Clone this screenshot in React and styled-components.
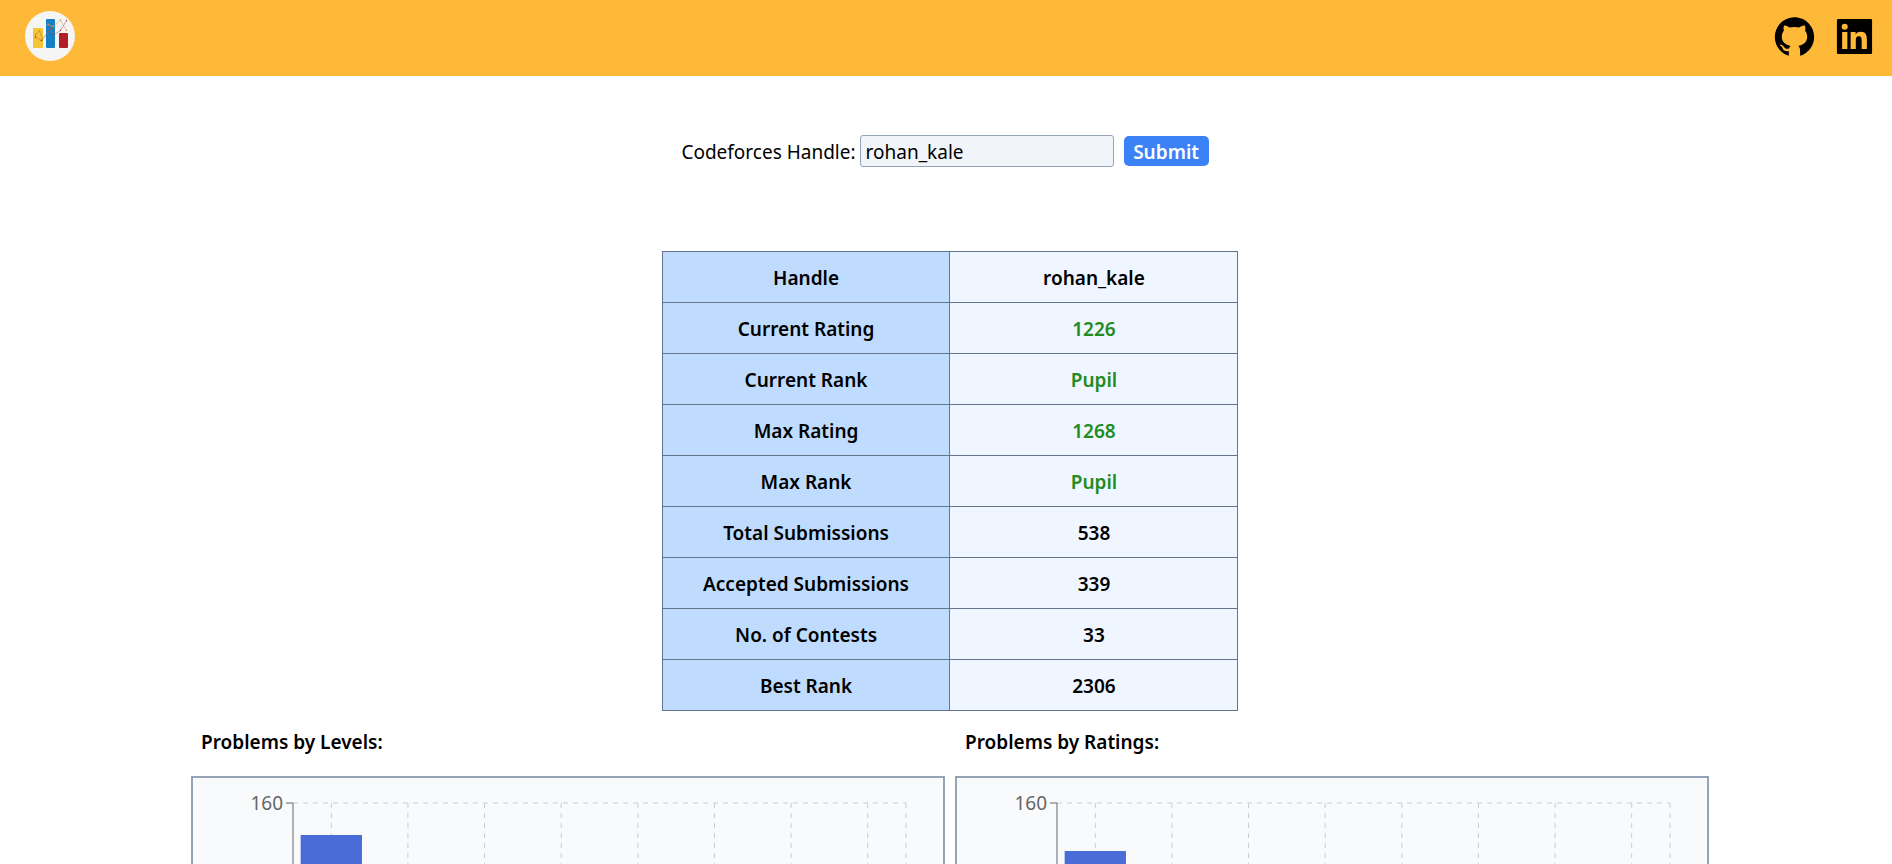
import React from "react";
import styled, { createGlobalStyle } from "styled-components";
import { AiFillGithub, AiFillLinkedin } from "react-icons/ai";

const GlobalStyle = createGlobalStyle`
  *, *::before, *::after { box-sizing: border-box; }
  body {
    margin: 0;
    background: #fff;
    color: #000;
    font-family: "Segoe UI", "Noto Sans", "Open Sans", sans-serif;
    font-size: 19px;
    line-height: 30px;
  }
`;

const Header = styled.header`
  display: flex;
  align-items: flex-start;
  justify-content: space-between;
  height: 76px;
  padding: 11px 15px 0 25px;
  background: #ffb938;
`;

const HomeLink = styled.a`
  display: flex;
`;

const SocialLinks = styled.nav`
  display: flex;
  gap: 15px;
  padding-top: 3px;
`;

const SocialLink = styled.a`
  display: flex;
  color: #000;
  font-size: 45px;
`;

const Main = styled.main`
  display: flex;
  flex-direction: column;
  align-items: center;
  padding: 59px 183px 40px 191px;
`;

const HandleForm = styled.form`
  display: flex;
  align-items: center;
  margin: 0 10px 84px 0;
`;

const HandleLabel = styled.label`
  padding-top: 1px;
`;

const HandleInput = styled.input`
  width: 254px;
  height: 32px;
  margin: 0 10px 0 4px;
  padding: 1px 5px 0;
  border: 1px solid #94a3b8;
  border-radius: 3px;
  background: #f1f5f9;
  color: #000;
  font: inherit;
`;

const SubmitButton = styled.button`
  width: 85px;
  height: 30px;
  padding: 1px 0 0;
  border: 0;
  border-radius: 5px;
  background: #3b82f6;
  color: #fff;
  font: inherit;
  font-weight: 600;
  cursor: pointer;
`;

const StatsTable = styled.table`
  width: 38%;
  table-layout: fixed;
  border-collapse: collapse;
  text-align: center;
  font-weight: 600;
`;

const StatName = styled.th`
  padding: 11px 0 9px;
  border: 1px solid #64748b;
  background: #bfdbfe;
  font-weight: 600;
`;

const StatValue = styled.td`
  padding: 11px 0 9px;
  border: 1px solid #64748b;
  background: #eff6ff;
  color: ${(p) => (p.$ranked ? "#228b22" : "#000")};
`;

const Charts = styled.div`
  display: grid;
  grid-template-columns: 1fr 1fr;
  gap: 10px;
  width: 100%;
`;

const ChartTitle = styled.h2`
  margin: 0;
  padding: 16px 10px 19px;
  font-size: 19px;
  font-weight: 600;
`;

const ChartPanel = styled.div`
  padding: 25px 37px 40px 100px;
  border: 2px solid #94a3b8;
  background: #f8fafc;
`;

const Plot = styled.svg`
  display: block;
  width: 100%;
  height: 320px;
  overflow: visible;
`;

const AxisLabel = styled.text`
  fill: #666;
  font-size: 19px;
  text-anchor: end;
`;

const stats = [
  ["Handle", "rohan_kale"],
  ["Current Rating", "1226", true],
  ["Current Rank", "Pupil", true],
  ["Max Rating", "1268", true],
  ["Max Rank", "Pupil", true],
  ["Total Submissions", "538"],
  ["Accepted Submissions", "339"],
  ["No. of Contests", "33"],
  ["Best Rank", "2306"],
];

const AXIS_MAX = 160;
const PLOT_HEIGHT = 320;
const CATEGORIES = 8;

function Logo() {
  return (
    <svg width="50" height="50" viewBox="0 0 50 50" aria-hidden="true">
      <circle cx="25" cy="25" r="25" fill="#f5f5f5" />
      <rect x="8" y="17" width="10" height="20" rx="1" fill="#f4c534" />
      <rect x="21" y="8" width="9" height="29" rx="1" fill="#147fc4" />
      <rect x="34" y="22" width="9" height="15" rx="1" fill="#b01e28" />
      <g fill="none" strokeWidth="0.6">
        <path d="M10.500 26L10.500 23.500L14.500 20L18 28.500L16.500 29.500L10.500 26" stroke="#c87832" />
        <path d="M16.500 29.500L25.500 18L28.500 24L35.500 19.500L41.500 9.500" stroke="#b8606a" />
        <path d="M23 13.500L28 15.500L35.500 9L41.500 19.500" stroke="#dba070" />
      </g>
      <g fill="#a63a2e">
        <circle cx="10.500" cy="26" r="0.800" />
        <circle cx="16.500" cy="29.500" r="0.800" />
        <circle cx="25.500" cy="18" r="0.800" />
        <circle cx="28.500" cy="24" r="0.800" />
        <circle cx="35.500" cy="19.500" r="0.700" />
        <circle cx="41.500" cy="9.500" r="0.700" />
      </g>
      <g fill="#dc8a2c">
        <circle cx="10.500" cy="23.500" r="0.800" />
        <circle cx="14.500" cy="20" r="0.800" />
        <circle cx="23" cy="13.500" r="0.900" />
        <circle cx="28" cy="15.500" r="0.900" />
        <circle cx="35.500" cy="9" r="0.700" />
        <circle cx="41.500" cy="19.500" r="0.700" />
      </g>
    </svg>
  );
}

function BarChart({ title, value }) {
  const step = 100 / CATEGORIES;
  const barHeight = (value / AXIS_MAX) * PLOT_HEIGHT;
  const gridLines = Array.from({ length: CATEGORIES }, (_, i) => (i + 0.5) * step);
  return (
    <section>
      <ChartTitle>{title}</ChartTitle>
      <ChartPanel>
        <Plot role="img" aria-label={title}>
          <g stroke="#ccc" strokeDasharray="5 5">
            <line x1="0" y1="0" x2="100%" y2="0" />
            {[...gridLines, 100].map((x) => (
              <line key={x} x1={`${x}%`} y1="0" x2={`${x}%`} y2="100%" />
            ))}
          </g>
          <rect
            x={`${step * 0.1}%`}
            y={PLOT_HEIGHT - barHeight}
            width={`${step * 0.8}%`}
            height={barHeight}
            fill="#4a6cd6"
          />
          <g stroke="#666">
            <line x1="0" y1="0" x2="0" y2="100%" />
            <line x1="-7" y1="0" x2="0" y2="0" />
            <line x1="0" y1="100%" x2="100%" y2="100%" />
          </g>
          <AxisLabel x="-10" y="7">{AXIS_MAX}</AxisLabel>
        </Plot>
      </ChartPanel>
    </section>
  );
}

export default function App() {
  return (
    <>
      <GlobalStyle />
      <Header>
        <HomeLink href="#" aria-label="Home">
          <Logo />
        </HomeLink>
        <SocialLinks>
          <SocialLink href="#github" aria-label="GitHub">
            <AiFillGithub />
          </SocialLink>
          <SocialLink href="#linkedin" aria-label="LinkedIn">
            <AiFillLinkedin />
          </SocialLink>
        </SocialLinks>
      </Header>
      <Main>
        <HandleForm onSubmit={(e) => e.preventDefault()}>
          <HandleLabel htmlFor="handle">Codeforces Handle:</HandleLabel>
          <HandleInput id="handle" type="text" defaultValue="rohan_kale" />
          <SubmitButton type="submit">Submit</SubmitButton>
        </HandleForm>
        <StatsTable>
          <tbody>
            {stats.map(([name, value, ranked]) => (
              <tr key={name}>
                <StatName scope="row">{name}</StatName>
                <StatValue $ranked={ranked}>{value}</StatValue>
              </tr>
            ))}
          </tbody>
        </StatsTable>
        <Charts>
          <BarChart title="Problems by Levels:" value={144} />
          <BarChart title="Problems by Ratings:" value={136} />
        </Charts>
      </Main>
    </>
  );
}
